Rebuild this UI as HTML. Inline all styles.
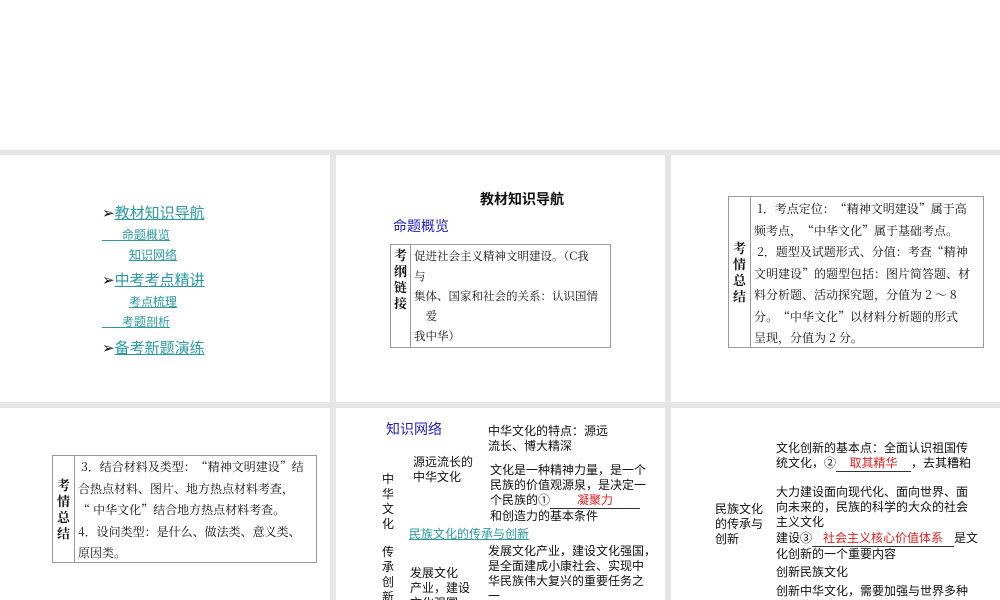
<!DOCTYPE html>
<html><head><meta charset="utf-8"><style>
*{margin:0;padding:0;box-sizing:border-box}
body{width:1000px;height:600px;position:relative;background:#fff;overflow:hidden;font-family:"Liberation Sans","Noto Sans CJK SC",sans-serif;color:#111}
.bg{position:absolute;left:0;top:150px;width:1000px;height:450px;background:#e6e6e6}
.p{position:absolute;background:#fff;overflow:hidden}
.a{position:absolute;white-space:nowrap}
.lk{color:#2a9aa0;text-decoration:underline}
.serif{font-family:"Noto Serif CJK SC","Liberation Serif",serif}
.tb{position:absolute;border:1px solid #999;display:flex;font-size:12px}
.tb .h{border-right:1px solid #999;font-weight:bold;font-size:13px;display:flex;align-items:center;justify-content:center;text-align:center;line-height:16px}
.red{color:#e02020}
</style></head><body>
<div class="bg"></div>
<div class="p" style="left:0;top:155px;width:330px;height:247px">
 <div class="a" style="left:102px;top:47px;font-size:15px">➢<span class="lk">教材知识导航</span></div>
 <div class="a lk" style="left:102px;top:71px;font-size:12px">&nbsp;&nbsp;&nbsp;&nbsp;&nbsp;&nbsp;命题概览</div>
 <div class="a lk" style="left:129px;top:91px;font-size:12px">知识网络</div>
 <div class="a" style="left:102px;top:114px;font-size:15px">➢<span class="lk">中考考点精讲</span></div>
 <div class="a lk" style="left:129px;top:138px;font-size:12px">考点梳理</div>
 <div class="a lk" style="left:102px;top:158px;font-size:12px">&nbsp;&nbsp;&nbsp;&nbsp;&nbsp;&nbsp;考题剖析</div>
 <div class="a" style="left:102px;top:182px;font-size:15px">➢<span class="lk">备考新题演练</span></div>
</div>
<div class="p" style="left:336px;top:155px;width:329px;height:247px">
 <div class="a" style="left:144px;top:34px;font-size:14px;font-weight:bold">教材知识导航</div>
 <div class="a" style="left:57px;top:61px;font-size:14px;color:#2020c0">命题概览</div>
 <div class="tb serif" style="left:54px;top:89px;width:221px;height:104px">
  <div class="h" style="width:20px;align-items:flex-start;padding-top:2px">考<br>纲<br>链<br>接</div>
  <div style="padding:1px 0 0 3px;line-height:20px;font-size:11.5px">促进社会主义精神文明建设。（C我<br>与<br>集体、国家和社会的关系：认识国情<br>&nbsp;&nbsp;&nbsp;&nbsp;爱<br>我中华）</div>
 </div>
</div>
<div class="p" style="left:671px;top:155px;width:329px;height:247px">
 <div class="tb serif" style="left:57px;top:41px;width:256px;height:152px">
  <div class="h" style="width:22px">考<br>情<br>总<br>结</div>
  <div style="padding:1px 0 0 3px;line-height:21.5px;font-size:12px">&nbsp;1．考点定位：“精神文明建设”属于高<br>频考点，“中华文化”属于基础考点。<br>&nbsp;2．题型及试题形式、分值：考查“精神<br>文明建设”的题型包括：图片简答题、材<br>料分析题、活动探究题，分值为 2 ～ 8<br>分。“中华文化”以材料分析题的形式<br>呈现，分值为 2 分。</div>
 </div>
</div>
<div class="p" style="left:0;top:408px;width:330px;height:192px">
 <div class="tb serif" style="left:52px;top:47px;width:265px;height:108px">
  <div class="h" style="width:22px">考<br>情<br>总<br>结</div>
  <div style="padding:0 0 0 3px;line-height:21.5px;font-size:12px">&nbsp;3．结合材料及类型：“精神文明建设”结<br>合热点材料、图片、地方热点材料考查，<br>“ 中华文化”结合地方热点材料考查。<br>4．设问类型：是什么、做法类、意义类、<br>原因类。</div>
 </div>
</div>
<div class="p" style="left:336px;top:408px;width:329px;height:192px;font-size:12px;line-height:15px">
 <div class="a" style="left:50px;top:14px;font-size:14px;color:#2020c0">知识网络</div>
 <div class="a" style="left:152px;top:16px">中华文化的特点：源远<br>流长、博大精深</div>
 <div class="a" style="left:77px;top:47px">源远流长的<br>中华文化</div>
 <div class="a" style="left:46px;top:64px;line-height:15px">中<br>华<br>文<br>化</div>
 <div class="a" style="left:154px;top:55px">文化是一种精神力量，是一个<br>民族的价值观源泉，是决定一<br>个民族的①<span style="display:inline-block;width:90px;border-bottom:1px solid #333;text-align:center" class="red">凝聚力</span><br>和创造力的基本条件</div>
 <div class="a lk" style="left:73px;top:119px">民族文化的传承与创新</div>
 <div class="a" style="left:46px;top:137px;line-height:15px">传<br>承<br>创<br>新</div>
 <div class="a" style="left:152px;top:136px">发展文化产业，建设文化强国，<br>是全面建成小康社会、实现中<br>华民族伟大复兴的重要任务之<br>一</div>
 <div class="a" style="left:74px;top:158px">发展文化<br>产业，建设<br>文化强国</div>
</div>
<div class="p" style="left:671px;top:408px;width:329px;height:192px;font-size:12px;line-height:15px">
 <div class="a" style="left:105px;top:33px">文化创新的基本点：全面认识祖国传<br>统文化，②<span style="display:inline-block;width:75px;border-bottom:1px solid #333;text-align:center" class="red">取其精华</span>，去其糟粕</div>
 <div class="a" style="left:105px;top:77px">大力建设面向现代化、面向世界、面<br>向未来的，民族的科学的大众的社会<br>主义文化</div>
 <div class="a" style="left:44px;top:94px">民族文化<br>的传承与<br>创新</div>
 <div class="a" style="left:105px;top:123px">建设③<span style="display:inline-block;width:142px;border-bottom:1px solid #333;text-align:center" class="red">社会主义核心价值体系</span>是文<br>化创新的一个重要内容</div>
 <div class="a" style="left:105px;top:157px">创新民族文化</div>
 <div class="a" style="left:105px;top:176px">创新中华文化，需要加强与世界多种<br>文明的交流</div>
</div>
</body></html>
